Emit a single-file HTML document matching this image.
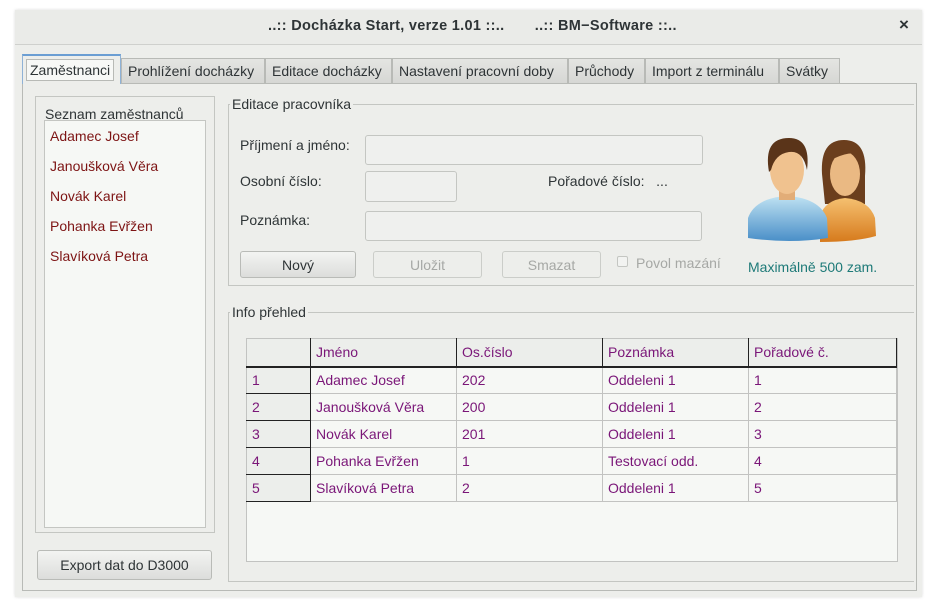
<!DOCTYPE html>
<html><head><meta charset="utf-8"><style>
*{box-sizing:border-box;margin:0;padding:0}
body{width:939px;height:605px;background:#fff;font-family:"Liberation Sans",sans-serif;font-size:14px;color:#2e3436;position:relative;overflow:hidden}
.a{position:absolute;white-space:nowrap}
.win{left:15px;top:10px;width:907px;height:587px;background:#edeeeb;box-shadow:0 0 3px rgba(0,0,0,.15)}
.title{left:15px;top:10px;width:907px;height:35px;border-bottom:1px solid #cfd0cd;background:#eaebe8}
.tab{top:58px;height:25px;border:1px solid #b8bab6;border-bottom:none;background:linear-gradient(#e4e5e2,#d6d7d4);padding:4px 6px 0;white-space:nowrap;font-size:14px}
.inp{background:#eff0ee;border:1px solid #c4c6c2;border-radius:3px}
.btn{border:1px solid #b9bbb7;border-radius:3px;background:linear-gradient(#f3f4f2,#dcdddb);text-align:center;padding-top:5px;font-size:14px}
.dis{background:#edeeeb;color:#a6a8a5;border-color:#cbcdc9}
.grp{border:1px solid #c4c6c2}
.red{color:#7d1414}
table{border-collapse:collapse;font-size:14px;color:#7a1678}
td{height:27px;border:1px solid #c2c3c1;padding:0 0 0 5px;background:#f6f8f5;white-space:nowrap}
</style></head><body>
<div class="a win"></div>
<div class="a title"></div>
<div class="a" style="left:268px;top:18px;font-weight:bold;font-size:14.5px;color:#2e3436;letter-spacing:0.3px">..:: Docházka Start, verze 1.01 ::..&nbsp;&nbsp;&nbsp;&nbsp;&nbsp;&nbsp;&nbsp;..:: BM−Software ::..</div>
<div class="a" style="left:899px;top:15px;font-size:17px;font-weight:bold">×</div>

<div class="a" style="left:22px;top:83px;width:895px;height:508px;border:1px solid #b8bab6;background:#edeeeb"></div>
<div class="a tab" style="left:22px;top:54px;width:99px;height:30px;background:#edeeeb;border-color:#8fb2d6;border-top:2px solid #6b9ed3;padding:6px 3px 0"><span style="background:#f7f8f6;border:1px solid #b8bab6;padding:2px 3px 2px">Zaměstnanci</span></div>
<div class="a tab" style="left:121px;width:144px">Prohlížení docházky</div>
<div class="a tab" style="left:265px;width:127px">Editace docházky</div>
<div class="a tab" style="left:392px;width:176px">Nastavení pracovní doby</div>
<div class="a tab" style="left:568px;width:77px">Průchody</div>
<div class="a tab" style="left:645px;width:134px">Import z terminálu</div>
<div class="a tab" style="left:779px;width:61px">Svátky</div>

<!-- left list -->
<div class="a grp" style="left:35px;top:96px;width:180px;height:437px"></div>
<div class="a" style="left:45px;top:106px">Seznam zaměstnanců</div>
<div class="a" style="left:44px;top:120px;width:162px;height:408px;background:#f6f8f5;border:1px solid #c4c6c2"></div>
<div class="a red" style="left:50px;top:128px">Adamec Josef</div>
<div class="a red" style="left:50px;top:158px">Janoušková Věra</div>
<div class="a red" style="left:50px;top:188px">Novák Karel</div>
<div class="a red" style="left:50px;top:218px">Pohanka Evřžen</div>
<div class="a red" style="left:50px;top:248px">Slavíková Petra</div>
<div class="a btn" style="left:37px;top:550px;width:175px;height:30px;padding-top:6px">Export dat do D3000</div>

<!-- edit group -->
<div class="a" style="left:228px;top:104px;width:686px;height:182px;border-left:1px solid #c4c6c2;border-top:1px solid #c4c6c2;border-bottom:1px solid #c4c6c2"></div>
<div class="a" style="left:230px;top:96px;background:#edeeeb;padding:0 2px">Editace pracovníka</div>
<div class="a" style="left:240px;top:137px">Příjmení a jméno:</div>
<div class="a inp" style="left:365px;top:135px;width:338px;height:30px"></div>
<div class="a" style="left:240px;top:173px">Osobní číslo:</div>
<div class="a inp" style="left:365px;top:171px;width:92px;height:31px"></div>
<div class="a" style="left:548px;top:173px">Pořadové číslo:&nbsp;&nbsp;&nbsp;...</div>
<div class="a" style="left:240px;top:212px">Poznámka:</div>
<div class="a inp" style="left:365px;top:211px;width:337px;height:30px"></div>
<div class="a btn" style="left:240px;top:251px;width:116px;height:27px">Nový</div>
<div class="a btn dis" style="left:373px;top:251px;width:109px;height:27px">Uložit</div>
<div class="a btn dis" style="left:502px;top:251px;width:99px;height:27px">Smazat</div>
<div class="a" style="left:617px;top:256px;width:11px;height:11px;border:1px solid #c4c6c2;border-radius:2px;background:#f2f3f1"></div>
<div class="a" style="left:636px;top:255px;color:#a6a8a5">Povol mazání</div>
<div class="a" style="left:748px;top:259px;color:#1e7a78">Maximálně 500 zam.</div>
<svg class="a" style="left:745px;top:134px" width="135" height="110" viewBox="0 0 135 110">
<defs><linearGradient id="b" x1="0" y1="0" x2="0" y2="1"><stop offset="0" stop-color="#bfe2f2"/><stop offset="1" stop-color="#4a8fc8"/></linearGradient>
<linearGradient id="o" x1="0" y1="0" x2="0" y2="1"><stop offset="0" stop-color="#f5c070"/><stop offset="1" stop-color="#d67a1c"/></linearGradient></defs>
<path d="M77 40 Q75 6 99 6 Q123 6 120 42 L120 70 L80 70Z" fill="#6b3e1d"/>
<path d="M75 108 L75 82 Q80 66 100 64 Q124 66 130 84 L131 102 Q110 108 75 108Z" fill="url(#o)"/>
<ellipse cx="100" cy="40" rx="15" ry="22" fill="#eab983"/>
<path d="M84 22 Q99 8 116 22 Q108 16 90 24Z" fill="#6b3e1d"/>
<path d="M3 104 L3 84 Q10 64 42 62 Q74 64 82 84 L83 104 Q45 110 3 104Z" fill="url(#b)"/>
<rect x="34" y="50" width="16" height="16" fill="#e2ad78"/>
<ellipse cx="42" cy="36" rx="17" ry="24" fill="#f0c28f"/>
<path d="M24 38 Q18 4 44 4 Q66 4 62 36 Q58 16 44 18 Q30 20 26 36Z" fill="#5a3419"/>
</svg>

<!-- info group -->
<div class="a" style="left:228px;top:312px;width:686px;height:270px;border:1px solid #c4c6c2;border-right:none"></div>
<div class="a" style="left:230px;top:304px;background:#edeeeb;padding:0 2px">Info přehled</div>
<div class="a" style="left:246px;top:338px;width:652px;height:224px;background:#f6f8f5;border:1px solid #c2c3c1"></div>
<table class="a" style="left:246px;top:338px;width:651px">
<tr style="height:28px"><td style="width:64px;background:#eceeeb;border-bottom:2px solid #222;border-right:1px solid #222"></td><td style="width:146px;background:#eceeeb;border-bottom:2px solid #222;border-right:1px solid #222">Jméno</td><td style="width:146px;background:#eceeeb;border-bottom:2px solid #222;border-right:1px solid #222">Os.číslo</td><td style="width:146px;background:#eceeeb;border-bottom:2px solid #222;border-right:1px solid #222">Poznámka</td><td style="background:#eceeeb;border-bottom:2px solid #222;border-right:1px solid #222">Pořadové č.</td></tr>
<tr><td style="background:#eceeeb;border-right:1px solid #222;border-bottom:1px solid #222">1</td><td>Adamec Josef</td><td>202</td><td>Oddeleni 1</td><td>1</td></tr>
<tr><td style="background:#eceeeb;border-right:1px solid #222;border-bottom:1px solid #222">2</td><td>Janoušková Věra</td><td>200</td><td>Oddeleni 1</td><td>2</td></tr>
<tr><td style="background:#eceeeb;border-right:1px solid #222;border-bottom:1px solid #222">3</td><td>Novák Karel</td><td>201</td><td>Oddeleni 1</td><td>3</td></tr>
<tr><td style="background:#eceeeb;border-right:1px solid #222;border-bottom:1px solid #222">4</td><td>Pohanka Evřžen</td><td>1</td><td>Testovací odd.</td><td>4</td></tr>
<tr><td style="background:#eceeeb;border-right:1px solid #222;border-bottom:1px solid #222">5</td><td>Slavíková Petra</td><td>2</td><td>Oddeleni 1</td><td>5</td></tr>
</table>
</body></html>
